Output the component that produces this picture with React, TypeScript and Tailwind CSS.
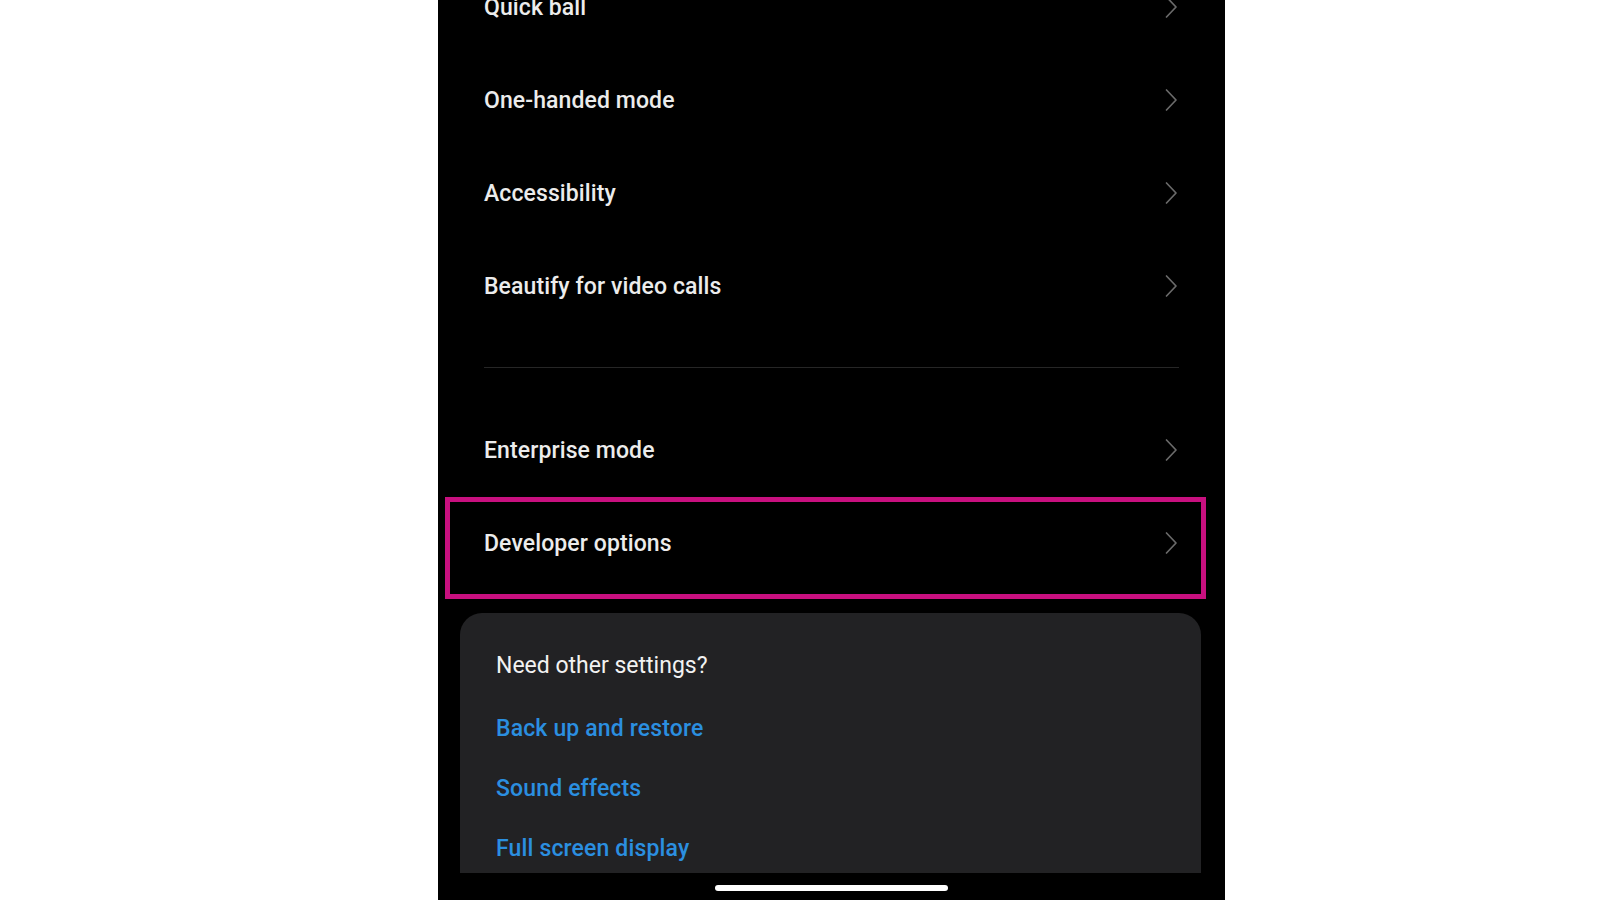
import React from "react";

const rows = ["Quick ball", "One-handed mode", "Accessibility", "Beautify for video calls"];

const Chevron = () => (
  <svg width="14" height="24" viewBox="0 0 14 24" fill="none" className="shrink-0 -mt-[3px]">
    <path d="M2.5 2 L12 12 L2.5 22" stroke="#6a6a6a" strokeWidth="1.7" strokeLinecap="round" strokeLinejoin="round" />
  </svg>
);

const Row: React.FC<{ label: string }> = ({ label }) => (
  <div className="h-[93px] flex items-center justify-between pl-[46px] pr-[47px]">
    <span className="text-[23px] font-medium text-[#ececec] tracking-[0.1px]">{label}</span>
    <Chevron />
  </div>
);

const links = ["Back up and restore", "Sound effects", "Full screen display"];

export default function App() {
  return (
    <div className="w-[1600px] h-[900px] bg-white overflow-hidden pl-[438px]" style={{ fontFamily: "Roboto, 'Noto Sans', sans-serif" }}>
      <div className="relative w-[787px] h-[900px] bg-black flex flex-col overflow-hidden">
        <div className="-mt-[38px]">
          {rows.map((r) => (
            <Row key={r} label={r} />
          ))}
        </div>
        <div className="mt-[33px] mx-[46px] h-[1px] bg-[#262626]" />
        <div className="mt-[37px]">
          <Row label="Enterprise mode" />
          <Row label="Developer options" />
        </div>
        {/* highlight box */}
        <div className="absolute left-[7px] top-[497px] w-[761px] h-[102px] border-[5px] border-[#c8107f]" />

        <div className="mt-[22px] mx-[22px] mr-[24px] flex-1 bg-[#222224] rounded-t-[22px] pl-[36px] pt-[38px]">
          <div className="text-[23px] text-[#f2f2f2] leading-[30px]">Need other settings?</div>
          <div className="mt-[33px] flex flex-col gap-[31px]">
            {links.map((l) => (
              <div key={l} className="text-[23px] font-medium text-[#2b8fe0] leading-[29px] tracking-[0.15px]">
                {l}
              </div>
            ))}
          </div>
        </div>
        <div className="h-[27px] shrink-0 flex justify-center pt-[12px]">
          <div className="w-[233px] h-[6px] rounded-full bg-white" />
        </div>
      </div>
    </div>
  );
}
